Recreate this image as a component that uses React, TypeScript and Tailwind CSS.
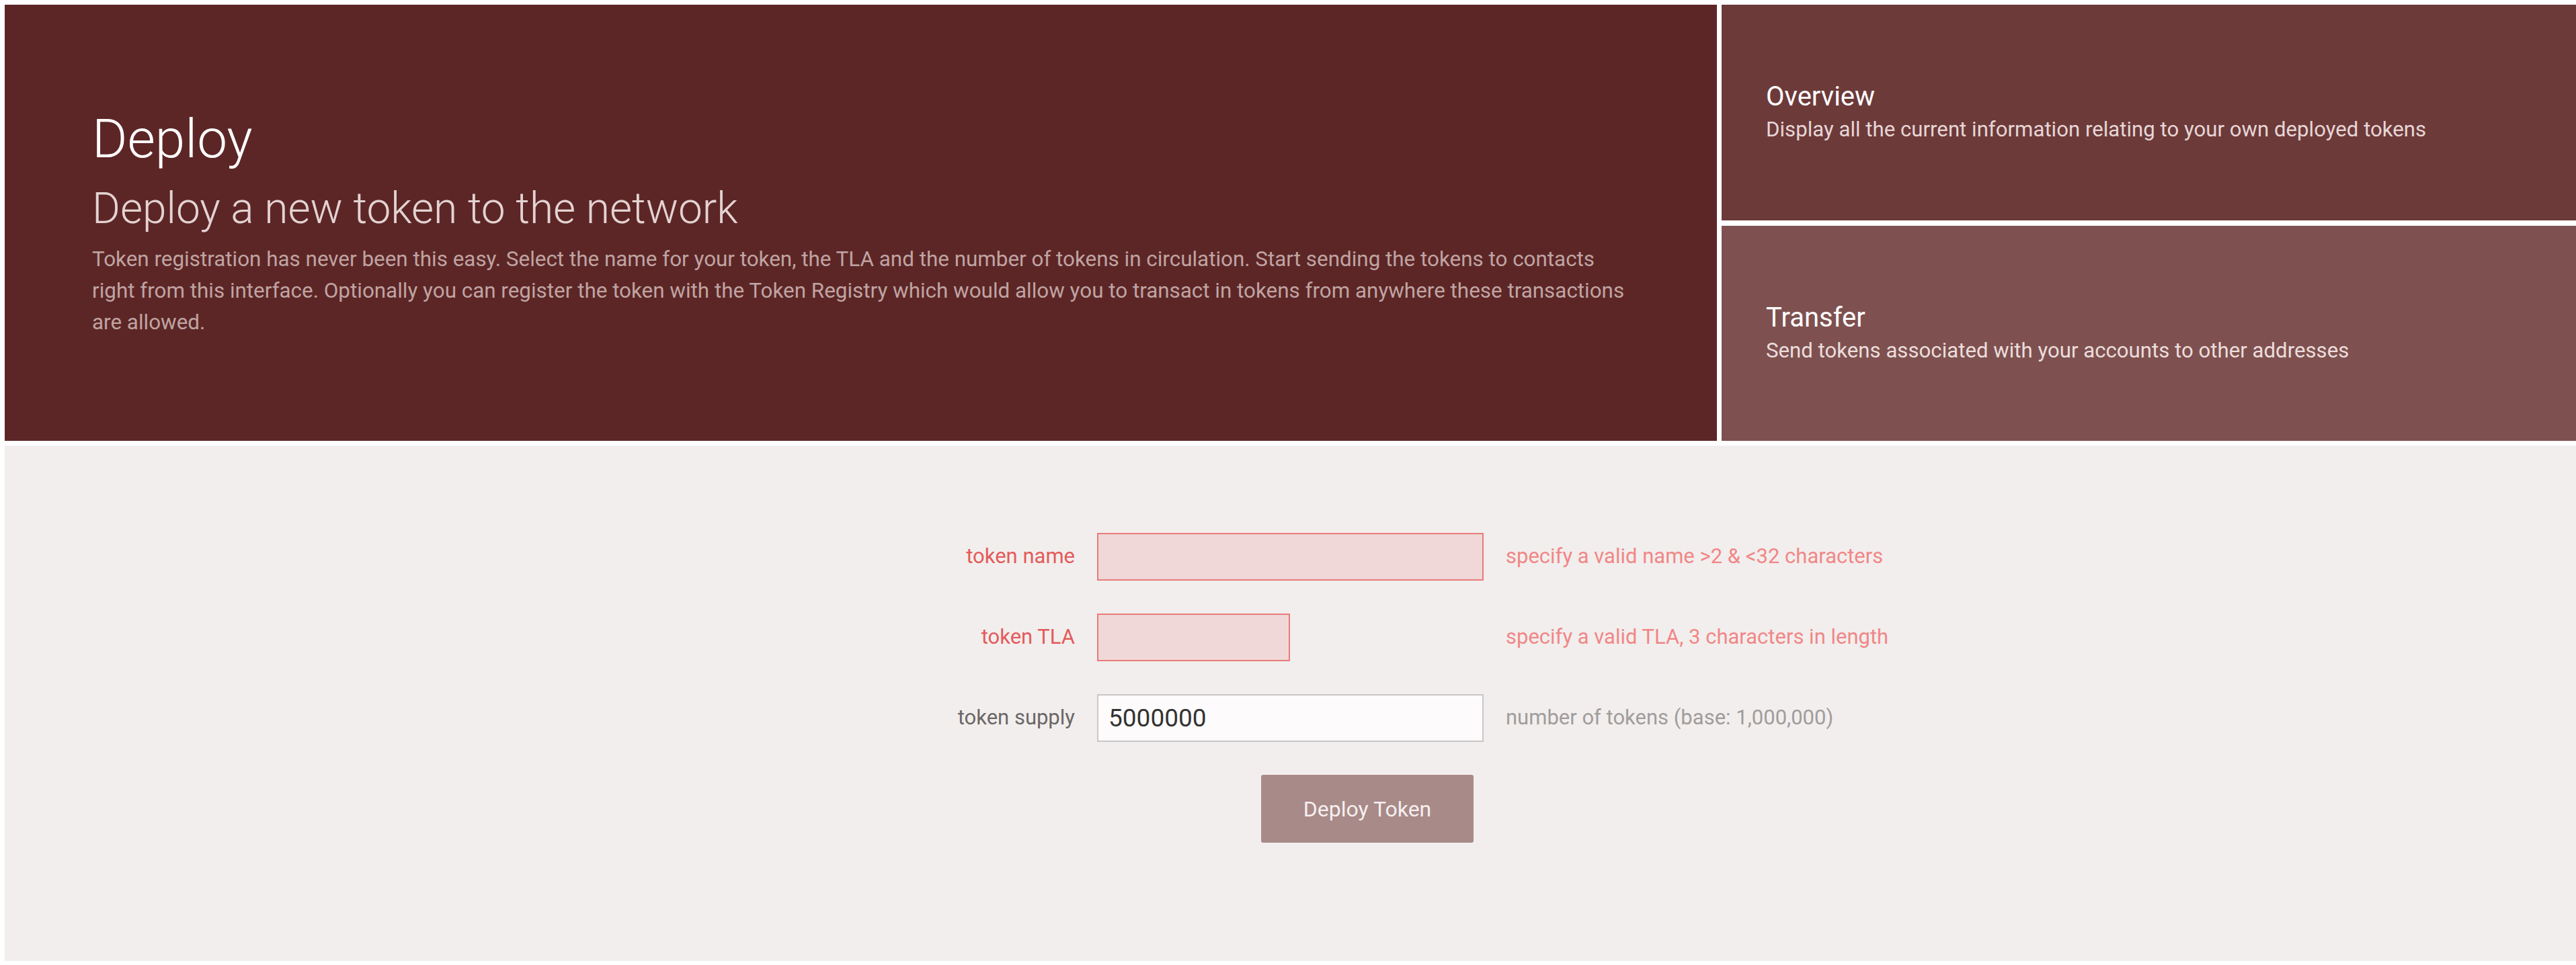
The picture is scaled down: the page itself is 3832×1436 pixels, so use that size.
export default function App() {
  return (
    <div className="min-h-screen bg-white pt-[7px] pl-[7px] font-['Roboto','Liberation_Sans',sans-serif]">
      {/* Hero */}
      <div className="flex h-[649px] gap-[7px]">
        <div className="w-[2547px] bg-[#5d2626] flex flex-col justify-center pl-[130px] pr-[36px]">
          <h1 className="text-[80px] leading-[94px] font-light text-white">Deploy</h1>
          <h2 className="mt-[20px] text-[64px] leading-[74px] font-light text-[#e3d3d2]">Deploy a new token to the network</h2>
          <p className="mt-[14px] text-[31.4px] leading-[47px] text-[#bfa4a3]">
            Token registration has never been this easy. Select the name for your token, the TLA and the number of tokens in circulation. Start sending the tokens to contacts
            <br />
            right from this interface. Optionally you can register the token with the Token Registry which would allow you to transact in tokens from anywhere these transactions
            <br />
            are allowed.
          </p>
        </div>
        <div className="flex-1 flex flex-col gap-[8px]">
          <div className="flex-1 bg-[#6d3a3a] flex flex-col justify-center pl-[66px]">
            <h3 className="text-[40px] leading-[46px] text-white">Overview</h3>
            <p className="mt-[6px] text-[31.2px] leading-[40px] text-[#e6d6d5]">Display all the current information relating to your own deployed tokens</p>
          </div>
          <div className="flex-1 bg-[#7e5150] flex flex-col justify-center pl-[66px]">
            <h3 className="text-[40px] leading-[46px] text-white">Transfer</h3>
            <p className="mt-[6px] text-[31.2px] leading-[40px] text-[#ecdddc]">Send tokens associated with your accounts to other addresses</p>
          </div>
        </div>
      </div>

      {/* Form */}
      <div className="mt-[7px] h-[767px] bg-[#f2eeed] pt-[130px]">
        <div className="grid grid-cols-[1fr_575px_1fr] gap-x-[33px] gap-y-[49px] items-center">
          <label className="text-right text-[31px] text-[#e35b5a]">token name</label>
          <input className="h-[71px] w-[575px] bg-[#f0d8d8] border-2 border-[#e97b7a] outline-none" />
          <span className="text-[31px] text-[#f08787]">specify a valid name &gt;2 &amp; &lt;32 characters</span>

          <label className="text-right text-[31px] text-[#e35b5a]">token TLA</label>
          <input className="h-[71px] w-[287px] bg-[#f0d8d8] border-2 border-[#e97b7a] outline-none" />
          <span className="text-[31px] text-[#f08787]">specify a valid TLA, 3 characters in length</span>

          <label className="text-right text-[31px] text-[#6b6767]">token supply</label>
          <input
            className="h-[71px] w-[575px] bg-[#fdfbfb] border-2 border-[#cac6c6] outline-none px-[15px] text-[37px] text-[#333333]"
            defaultValue="5000000"
          />
          <span className="text-[31px] text-[#a09c9c]">number of tokens (base: 1,000,000)</span>

          <div />
          <div>
            <button className="ml-[244px] w-[316px] h-[101px] rounded-[3px] bg-[#a88a89] text-[32px] text-[#f6efef]">
              Deploy Token
            </button>
          </div>
          <div />
        </div>
      </div>
    </div>
  );
}
